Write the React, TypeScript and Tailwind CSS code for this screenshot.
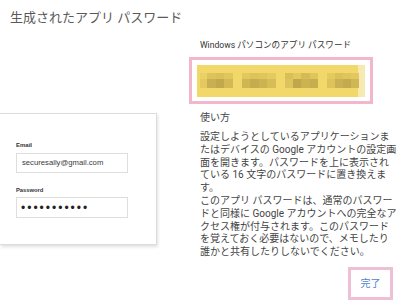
const groups = [
  [
    { w: 7, t: 'bg-[#ead164]', b: 'bg-[#e2c960]' },
    { w: 9, t: 'bg-[#dcc35b]', b: 'bg-[#c9af4f]' },
    { w: 8, t: 'bg-[#d9c05a]', b: 'bg-[#c2a84b]' },
    { w: 9, t: 'bg-[#e0c75d]', b: 'bg-[#d2b955]' },
  ],
  [
    { w: 8, t: 'bg-[#e2c95f]', b: 'bg-[#cfb654]' },
    { w: 9, t: 'bg-[#dcc35b]', b: 'bg-[#c6ac4d]' },
    { w: 8, t: 'bg-[#dfc65c]', b: 'bg-[#ccb352]' },
    { w: 9, t: 'bg-[#e4cb60]', b: 'bg-[#d6bd58]' },
  ],
  [
    { w: 8, t: 'bg-[#d8bf59]', b: 'bg-[#dcc35b]' },
    { w: 8, t: 'bg-[#e2c95f]', b: 'bg-[#c1a74a]' },
    { w: 9, t: 'bg-[#d4bb57]', b: 'bg-[#ccb352]' },
    { w: 8, t: 'bg-[#dfc65c]', b: 'bg-[#c7ad4e]' },
  ],
  [
    { w: 8, t: 'bg-[#e4cb60]', b: 'bg-[#dcc35b]' },
    { w: 8, t: 'bg-[#dac15a]', b: 'bg-[#cab050]' },
    { w: 8, t: 'bg-[#dfc65c]', b: 'bg-[#c4aa4c]' },
    { w: 8, t: 'bg-[#e2c95f]', b: 'bg-[#d0b755]' },
  ],
];

function BlurredPassword() {
  return (
    <div className="flex h-[32px] w-[168px] items-center bg-[#f2d86a]">
      <div className="flex h-full w-[161px] items-center gap-[9px] pl-[3px]">
        {groups.map((g, i) => (
          <div key={i} className="flex h-[15px] blur-[0.6px]">
            {g.map((b, j) => (
              <div key={j} className="flex h-full flex-col" style={{ width: b.w }}>
                <div className={`h-[6px] ${b.t}`} />
                <div className={`flex-1 ${b.b}`} />
              </div>
            ))}
          </div>
        ))}
      </div>
      <div className="h-full w-[7px] bg-[#f6e9b2]" />
    </div>
  );
}

function LoginCard() {
  return (
    <div className="mt-[86px] h-[132px] w-[157px] border border-l-0 border-[#dcdcdc] bg-white pl-[16px] pt-[27px] shadow-[1px_2px_3px_rgba(0,0,0,0.12)] font-['Liberation_Sans',Arial,sans-serif]">
      <p className="text-[6px] font-bold leading-[8px] text-[#333]">Email</p>
      <div className="mt-[4px] flex h-[20px] w-[112px] items-center border border-[#dedede] pl-[5px] text-[7.7px] text-[#3a3a3a]">
        securesally@gmail.com
      </div>
      <p className="mt-[13px] text-[5.8px] font-bold leading-[8px] text-[#333]">Password</p>
      <div className="mt-[3px] flex h-[21px] w-[112px] items-center border border-[#dedede] pl-[4px] text-[12px] tracking-[2px] text-[#222]">
        •••••••••••
      </div>
    </div>
  );
}

export default function App() {
  return (
    <div className="h-[305px] w-[400px] overflow-hidden bg-white font-['Roboto','Noto_Sans_CJK_JP',sans-serif]">
      <h1 className="pl-[10px] pt-[9px] text-[13px] font-normal leading-[18px] text-[#5a5a5a]">生成されたアプリ パスワード</h1>
      <div className="flex items-start">
        <LoginCard />
        <div className="ml-[32px] flex w-[204px] flex-col">
          <p className="mt-[12px] pl-[11px] text-[8.6px] leading-[12px] text-[#333]">Windows パソコンのアプリ パスワード</p>
          <div className="mt-[6px] flex h-[47px] w-[184px] items-center justify-center border-[3px] border-[#f4b6cc]">
            <BlurredPassword />
          </div>
          <p className="mt-[7px] pl-[11px] text-[10px] leading-[13px] text-[#444]">使い方</p>
          <p className="mt-[7px] whitespace-nowrap pl-[11px] text-[10px] leading-[12.8px] text-[#444]">
            設定しようとしているアプリケーションま
            <br />
            たはデバイスの Google アカウントの設定画
            <br />
            面を開きます。パスワードを上に表示され
            <br />
            ている 16 文字のパスワードに置き換えま
            <br />
            す。
            <br />
            このアプリ パスワードは、通常のパスワー
            <br />
            ドと同様に Google アカウントへの完全なア
            <br />
            クセス権が付与されます。このパスワード
            <br />
            を覚えておく必要はないので、メモしたり
            <br />
            誰かと共有したりしないでください。
          </p>
          <button className="mt-[8px] flex h-[33px] w-[45px] items-center justify-center self-end border-[3px] border-[#efbfd3] text-[10px] text-[#4f83d1]">
            完了
          </button>
        </div>
      </div>
    </div>
  );
}
